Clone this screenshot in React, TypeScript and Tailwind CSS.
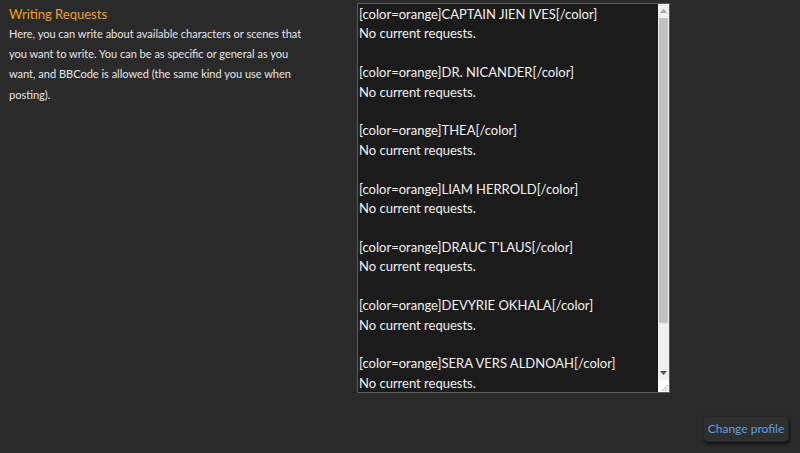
import React from "react";

const entries = [
  "CAPTAIN JIEN IVES",
  "DR. NICANDER",
  "THEA",
  "LIAM HERROLD",
  "DRAUC T'LAUS",
  "DEVYRIE OKHALA",
  "SERA VERS ALDNOAH",
];

export default function App() {
  return (
    <div
      className="w-[800px] h-[453px] bg-[#2a2a2a] overflow-hidden flex flex-col"
      style={{ fontFamily: "Lato, 'Open Sans', sans-serif" }}
    >
      <div className="flex pt-[3px]">
        <div className="w-[357px] pl-[9px]">
          <div className="text-[13px] leading-[20px] text-[#f0a020] pt-[1px]">Writing Requests</div>
          <p className="w-[304px] text-[11px] leading-[20.2px] text-[#e6e6e6]">
            Here, you can write about available characters or scenes that you want to write. You can be as specific or general as you want, and BBCode is allowed (the same kind you use when posting).
          </p>
        </div>
        <div className="w-[313px] h-[390px] border border-[#5c5c52] bg-[#1b1b1b] flex">
          <div className="flex-1 overflow-hidden pl-[1px] pt-[1px] text-[13px] leading-[19.4px] text-[#f2f2f2] whitespace-pre">
            {entries.map((e, i) => (
              <div key={i}>
                <div>[color=orange]{e}[/color]</div>
                <div>No current requests.</div>
                <div>&nbsp;</div>
              </div>
            ))}
          </div>
          <div className="w-[11px] bg-[#efefef] flex flex-col">
            <div className="h-[14px] flex items-center justify-center">
              <svg width="7" height="4" viewBox="0 0 7 4"><path d="M3.5 0 L7 4 L0 4 Z" fill="#a3a3a3" /></svg>
            </div>
            <div className="mx-[1px] h-[305px] bg-[#c1c1c1]" />
            <div className="flex-1" />
            <div className="h-[14px] flex items-center justify-center">
              <svg width="7" height="4" viewBox="0 0 7 4"><path d="M0 0 L7 0 L3.5 4 Z" fill="#505050" /></svg>
            </div>
            <div className="h-[12px] bg-white flex items-end justify-end">
              <svg width="10" height="10" viewBox="0 0 10 10">
                <path d="M9 3 L3 9 M9 6 L6 9" stroke="#aaaaaa" strokeWidth="1" />
              </svg>
            </div>
          </div>
        </div>
      </div>
      <div className="flex justify-end pr-[11px] pt-[23px]">
        <button className="w-[86px] h-[26px] rounded-[4px] bg-[#2f2f2f] border border-[#262626] shadow-[1px_2px_3px_rgba(0,0,0,0.6)] text-[12px] text-[#5e9fe0]">
          Change profile
        </button>
      </div>
    </div>
  );
}
